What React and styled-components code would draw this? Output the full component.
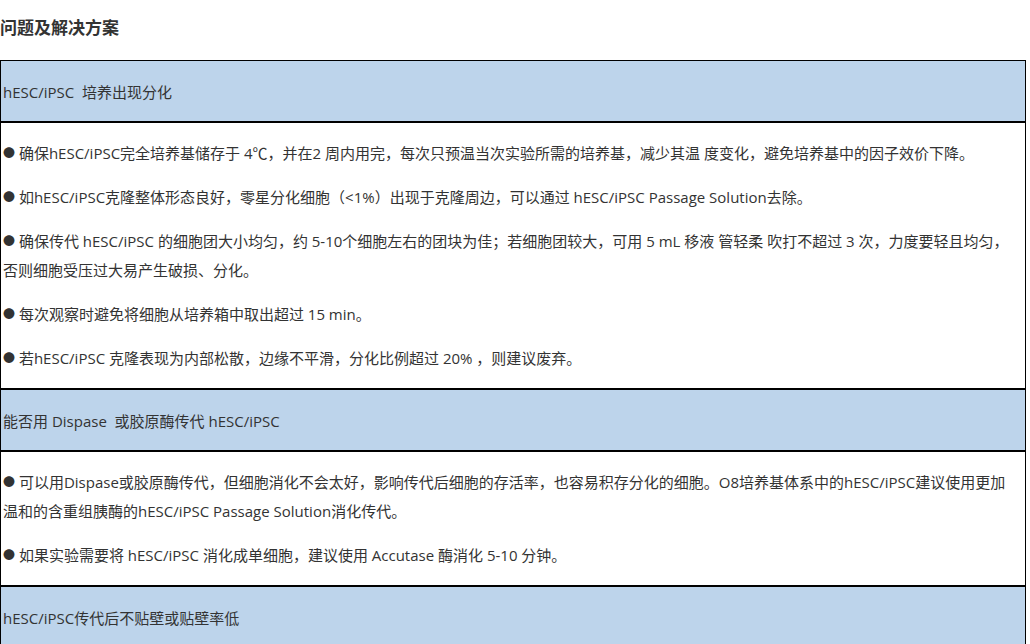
import React from 'react';
import styled, { createGlobalStyle } from 'styled-components';

const Global = createGlobalStyle`
  body {
    margin: 0;
    background: #fff;
    font-family: "Open Sans", "Noto Sans CJK SC", sans-serif;
    color: #333;
  }
`;

const Page = styled.div`
  width: 1026px;
  padding-top: 16px;
`;

const Title = styled.h3`
  margin: 0 0 20px;
  font-size: 17px;
  line-height: 24px;
  font-weight: bold;
  color: #333;
`;

const Table = styled.div`
  border-left: 1px solid #000;
  border-right: 1px solid #000;
  border-top: 1px solid #000;
`;

const Head = styled.div`
  background: #bdd4eb;
  height: 60px;
  display: flex;
  align-items: center;
  padding-left: 2px;
  font-size: 15px;
  border-bottom: 2px solid #000;
`;

const Body = styled.div`
  padding: 16px 10px 0 2px;
  border-bottom: 2px solid #000;
`;

const P = styled.p`
  margin: 0 0 15px;
  font-size: 15px;
  line-height: 29px;
`;

const Dot = styled.span`
  font-size: 12px;
  vertical-align: 1px;
`;

const sections = [
  {
    head: 'hESC/iPSC  培养出现分化',
    items: [
      ' 确保hESC/iPSC完全培养基储存于 4℃，并在2 周内用完，每次只预温当次实验所需的培养基，减少其温 度变化，避免培养基中的因子效价下降。',
      ' 如hESC/iPSC克隆整体形态良好，零星分化细胞（<1%）出现于克隆周边，可以通过 hESC/iPSC Passage Solution去除。',
      ' 确保传代 hESC/iPSC  的细胞团大小均匀，约 5-10个细胞左右的团块为佳；若细胞团较大，可用 5 mL 移液 管轻柔 吹打不超过 3 次，力度要轻且均匀，否则细胞受压过大易产生破损、分化。',
      ' 每次观察时避免将细胞从培养箱中取出超过 15 min。',
      ' 若hESC/iPSC 克隆表现为内部松散，边缘不平滑，分化比例超过 20% ，则建议废弃。',
    ],
  },
  {
    head: '能否用 Dispase  或胶原酶传代 hESC/iPSC',
    items: [
      ' 可以用Dispase或胶原酶传代，但细胞消化不会太好，影响传代后细胞的存活率，也容易积存分化的细胞。O8培养基体系中的hESC/iPSC建议使用更加温和的含重组胰酶的hESC/iPSC Passage Solution消化传代。',
      ' 如果实验需要将 hESC/iPSC 消化成单细胞，建议使用 Accutase 酶消化 5-10 分钟。',
    ],
  },
  {
    head: 'hESC/iPSC传代后不贴壁或贴壁率低',
    items: [],
  },
];

export default function App() {
  return (
    <Page>
      <Global />
      <Title>问题及解决方案</Title>
      <Table>
        {sections.map((s) => (
          <React.Fragment key={s.head}>
            <Head>{s.head.replace(/ /g, '\u00a0')}</Head>
            {s.items.length > 0 && (
              <Body>
                {s.items.map((t) => (
                  <P key={t}>
                    <Dot>●</Dot>
                    {t}
                  </P>
                ))}
              </Body>
            )}
          </React.Fragment>
        ))}
      </Table>
    </Page>
  );
}
